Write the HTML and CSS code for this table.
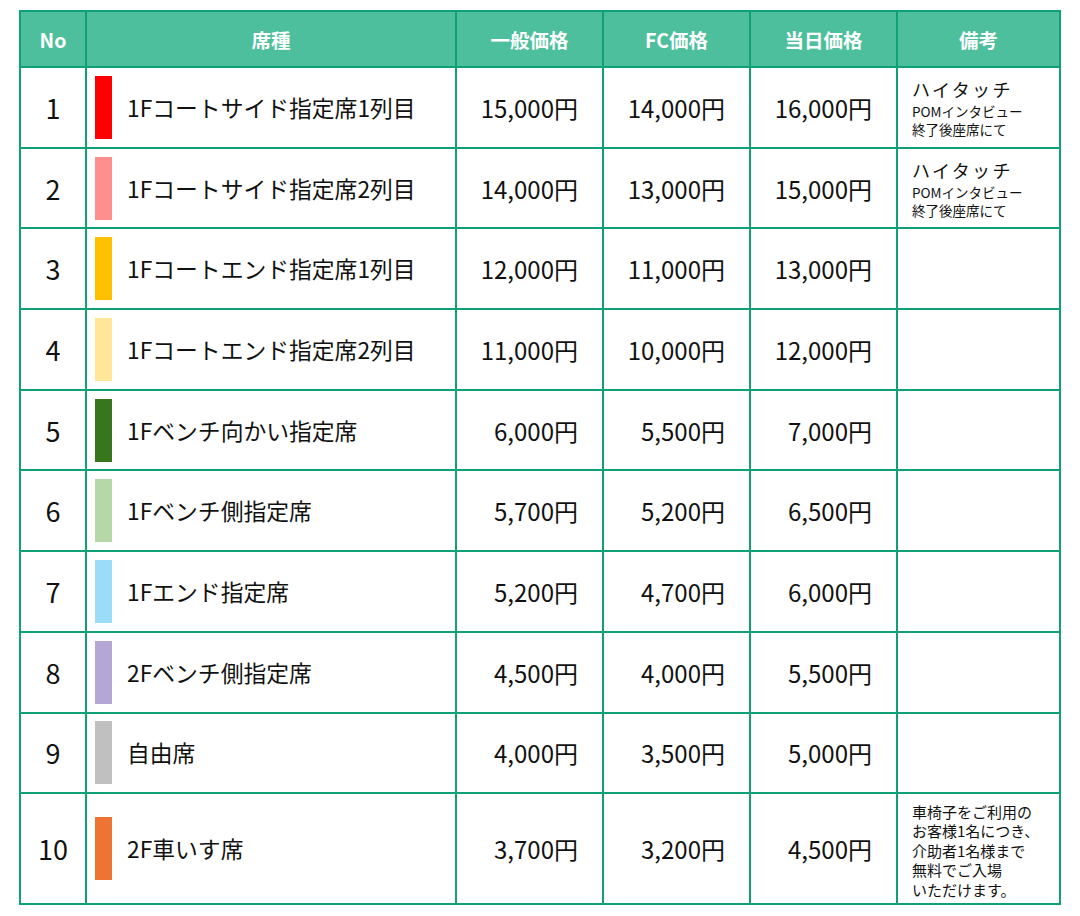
FILE: index.html
```html
<!DOCTYPE html>
<html lang="ja">
<head>
<meta charset="utf-8">
<title>席種・価格表</title>
<link rel="stylesheet" href="styles.css">
</head>
<body>
<div class="page">
<table class="price-table">
  <colgroup>
    <col class="c-no"><col class="c-seat"><col class="c-price"><col class="c-price"><col class="c-price"><col class="c-note">
  </colgroup>
  <thead>
    <tr><th>No</th><th>席種</th><th>一般価格</th><th>FC価格</th><th>当日価格</th><th>備考</th></tr>
  </thead>
  <tbody>
    <tr>
      <td class="no">1</td>
      <td class="seat"><div class="seat-in"><span class="swatch s1"></span><span>1Fコートサイド指定席1列目</span></div></td>
      <td class="price">15,000円</td><td class="price">14,000円</td><td class="price">16,000円</td>
      <td class="note"><div class="ht">ハイタッチ</div><div class="sm">POMインタビュー<br>終了後座席にて</div></td>
    </tr>
    <tr>
      <td class="no">2</td>
      <td class="seat"><div class="seat-in"><span class="swatch s2"></span><span>1Fコートサイド指定席2列目</span></div></td>
      <td class="price">14,000円</td><td class="price">13,000円</td><td class="price">15,000円</td>
      <td class="note"><div class="ht">ハイタッチ</div><div class="sm">POMインタビュー<br>終了後座席にて</div></td>
    </tr>
    <tr>
      <td class="no">3</td>
      <td class="seat"><div class="seat-in"><span class="swatch s3"></span><span>1Fコートエンド指定席1列目</span></div></td>
      <td class="price">12,000円</td><td class="price">11,000円</td><td class="price">13,000円</td>
      <td class="note"></td>
    </tr>
    <tr>
      <td class="no">4</td>
      <td class="seat"><div class="seat-in"><span class="swatch s4"></span><span>1Fコートエンド指定席2列目</span></div></td>
      <td class="price">11,000円</td><td class="price">10,000円</td><td class="price">12,000円</td>
      <td class="note"></td>
    </tr>
    <tr>
      <td class="no">5</td>
      <td class="seat"><div class="seat-in"><span class="swatch s5"></span><span>1Fベンチ向かい指定席</span></div></td>
      <td class="price">6,000円</td><td class="price">5,500円</td><td class="price">7,000円</td>
      <td class="note"></td>
    </tr>
    <tr>
      <td class="no">6</td>
      <td class="seat"><div class="seat-in"><span class="swatch s6"></span><span>1Fベンチ側指定席</span></div></td>
      <td class="price">5,700円</td><td class="price">5,200円</td><td class="price">6,500円</td>
      <td class="note"></td>
    </tr>
    <tr>
      <td class="no">7</td>
      <td class="seat"><div class="seat-in"><span class="swatch s7"></span><span>1Fエンド指定席</span></div></td>
      <td class="price">5,200円</td><td class="price">4,700円</td><td class="price">6,000円</td>
      <td class="note"></td>
    </tr>
    <tr>
      <td class="no">8</td>
      <td class="seat"><div class="seat-in"><span class="swatch s8"></span><span>2Fベンチ側指定席</span></div></td>
      <td class="price">4,500円</td><td class="price">4,000円</td><td class="price">5,500円</td>
      <td class="note"></td>
    </tr>
    <tr>
      <td class="no">9</td>
      <td class="seat"><div class="seat-in"><span class="swatch s9"></span><span>自由席</span></div></td>
      <td class="price">4,000円</td><td class="price">3,500円</td><td class="price">5,000円</td>
      <td class="note"></td>
    </tr>
    <tr class="tall">
      <td class="no">10</td>
      <td class="seat"><div class="seat-in"><span class="swatch s10"></span><span>2F車いす席</span></div></td>
      <td class="price">3,700円</td><td class="price">3,200円</td><td class="price">4,500円</td>
      <td class="note"><div class="long">車椅子をご利用の<br>お客様1名につき、<br>介助者1名様まで<br>無料でご入場<br>いただけます。</div></td>
    </tr>
  </tbody>
</table>
</div>
</body>
</html>
```

FILE: styles.css
```css
html, body {
  margin: 0;
  padding: 0;
  background: #ffffff;
}

.page {
  padding: 10px 0 0 19px;
  font-family: "Noto Sans CJK JP", "Noto Sans", sans-serif;
  color: #111111;
}

.price-table {
  border-collapse: collapse;
  table-layout: fixed;
  width: 1042px;
}

.c-no { width: 66px; }
.c-seat { width: 370px; }
.c-price { width: 147px; }
.c-note { width: 163px; }

.price-table th,
.price-table td {
  border: 2px solid #10a077;
  padding: 0;
  vertical-align: middle;
}

.price-table thead tr {
  height: 56px;
}

.price-table th {
  background: #4dbf9c;
  color: #ffffff;
  font-weight: 700;
  font-size: 19.5px;
  text-align: center;
}

.price-table tbody tr {
  height: 80.7px;
}

.price-table tbody tr.tall {
  height: 111px;
}

.no {
  text-align: center;
  font-size: 27px;
}

.seat {
  font-size: 22.8px;
}

.seat-in {
  display: flex;
  align-items: center;
  gap: 15px;
  padding-left: 8px;
}

.swatch {
  display: block;
  width: 17px;
  height: 63px;
  flex: none;
}

.s1 { background: #ff0000; }
.s2 { background: #ff8f8f; }
.s3 { background: #ffc000; }
.s4 { background: #ffe699; }
.s5 { background: #38761d; }
.s6 { background: #b6d7a8; }
.s7 { background: #9bdcf8; }
.s8 { background: #b4a7d6; }
.s9 { background: #c0c0c0; }
.s10 { background: #ed7432; }

.price {
  text-align: right;
  padding-right: 24px !important;
  font-size: 24px;
}

.note {
  padding-left: 14px !important;
}

.ht {
  font-size: 18px;
  letter-spacing: 2.4px;
  line-height: 25px;
}

.sm {
  font-size: 13.5px;
  line-height: 18px;
}

.long {
  font-size: 15px;
  line-height: 19.6px;
  padding-top: 4px;
}
```
